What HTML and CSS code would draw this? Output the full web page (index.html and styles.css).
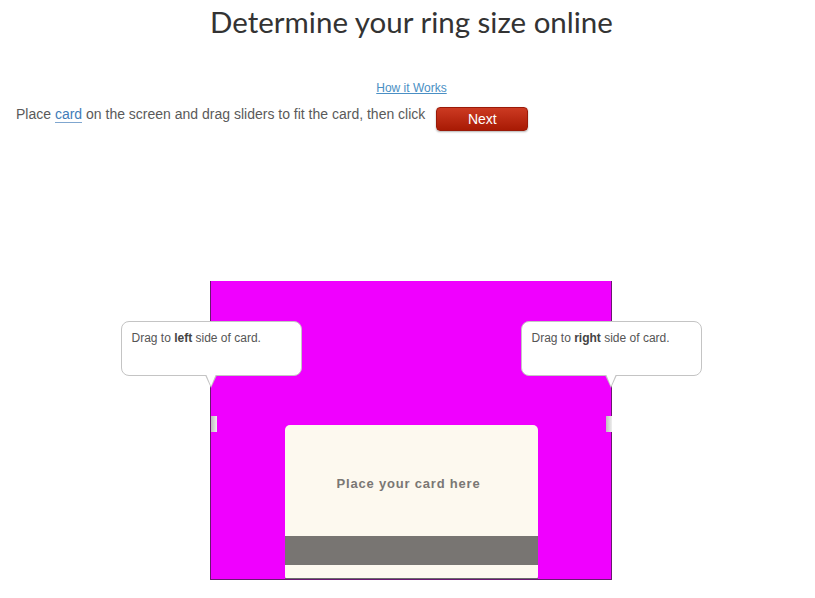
FILE: index.html
```html
<!DOCTYPE html>
<html lang="en">

<head>
    <meta charset="UTF-8">
    <meta name="viewport" content="width=device-width, initial-scale=1.0">
    <title>Ring Size</title>
    <link rel="stylesheet" href="styles.css">
</head>

<body>
    <h1 class="title">Determine your ring size online</h1>

    <div class="howto">
        <a href="javascript:void(0);">How it Works</a>
    </div>

    <div class="instructions">
        <span>Place <a class="cardLink" href="javascript:void(0);">card</a> on the screen and drag sliders to fit the card, then click</span>
        <button type="button" class="nextBtn">Next</button>
    </div>

    <div class="stage">
        <div class="frame">
            <div class="card">
                <div class="cardText">Place your card here</div>
                <div class="stripe"></div>
                <div class="cardFoot"></div>
            </div>
        </div>

        <!-- tooltips and slider handles sit over the frame -->
        <div class="tip tipLeft">Drag to <b>left</b> side of card.</div>
        <div class="tip tipRight">Drag to <b>right</b> side of card.</div>
        <div class="handle handleLeft"></div>
        <div class="handle handleRight"></div>
    </div>
</body>

</html>
```

FILE: styles.css
```css
body {
    font-family: 'Liberation Sans', Arial, sans-serif;
    margin: 0;
    background-color: #fff;
    color: #555;
}

.title {
    font-family: 'Lato', sans-serif;
    font-weight: 400;
    font-size: 29.5px;
    line-height: 36px;
    color: #333;
    text-align: center;
    margin: 4px 0 0 8px;
}

.howto {
    text-align: center;
    font-size: 12px;
    line-height: 14px;
    margin-top: 41px;
    padding-left: 8px;
}

.howto a {
    color: #4a8fc4;
}

.instructions {
    display: flex;
    align-items: flex-start;
    padding-left: 16px;
    margin-top: 10px;
    font-size: 14px;
    line-height: 18px;
    color: #5a5a5a;
}

.cardLink {
    color: #3f7cb8;
    text-decoration: none;
    border-bottom: 1px solid #7fa6cf;
}

.nextBtn {
    width: 92px;
    height: 24px;
    margin-left: 11px;
    margin-top: 2px;
    border: 1px solid #9a1a08;
    border-radius: 4px;
    background: linear-gradient(#cc3a22, #a81a04);
    color: #fff;
    font-family: 'Liberation Sans', Arial, sans-serif;
    font-size: 14px;
    box-shadow: 0 1px 2px rgba(0, 0, 0, 0.3);
}

.stage {
    position: relative;
    width: 402px;
    margin-top: 150px;
    margin-left: calc(50% - 198px);
}

.frame {
    height: 299px;
    background-color: #f000ff;
    border-left: 1px solid #6a1870;
    border-right: 1px solid #6a1870;
    border-bottom: 1px solid #6a1870;
    box-sizing: border-box;
    display: flex;
    justify-content: center;
    align-items: flex-end;
}

.card {
    width: 253px;
    height: 154px;
    background-color: #fdf9ef;
    border-radius: 5px 5px 3px 3px;
    display: flex;
    flex-direction: column;
    margin-left: 2px;
}

.cardText {
    flex: 1;
    display: flex;
    align-items: center;
    justify-content: center;
    padding-top: 5px;
    padding-right: 6px;
    font-size: 13px;
    font-weight: bold;
    letter-spacing: 0.8px;
    color: #7a7774;
}

.stripe {
    height: 29px;
    background-color: #787572;
}

.cardFoot {
    height: 13px;
    border-bottom: 1px solid #6b6b6b;
}

.tip {
    position: absolute;
    top: 40px;
    width: 181px;
    height: 55px;
    box-sizing: border-box;
    padding: 9px 10px;
    background-color: #fff;
    border: 1px solid #c4c4c4;
    border-radius: 8px;
    font-size: 12px;
    color: #555;
}

.tip b {
    color: #444;
}

/* tail: gray triangle under a white one */
.tip::before,
.tip::after {
    content: '';
    position: absolute;
    left: 83px;
    width: 0;
    height: 0;
    border-left: 6px solid transparent;
    border-right: 6px solid transparent;
}

.tip::before {
    bottom: -13px;
    border-top: 13px solid #c4c4c4;
}

.tip::after {
    bottom: -11px;
    left: 84px;
    border-left-width: 5px;
    border-right-width: 5px;
    border-top: 12px solid #fff;
}

.tipLeft {
    left: -89px;
}

.tipRight {
    left: 311px;
}

.handle {
    position: absolute;
    top: 135px;
    width: 6px;
    height: 16px;
    background: linear-gradient(90deg, #bdbdbd, #eeeeee);
}

.handleLeft {
    left: 1px;
}

.handleRight {
    left: 396px;
}
```
